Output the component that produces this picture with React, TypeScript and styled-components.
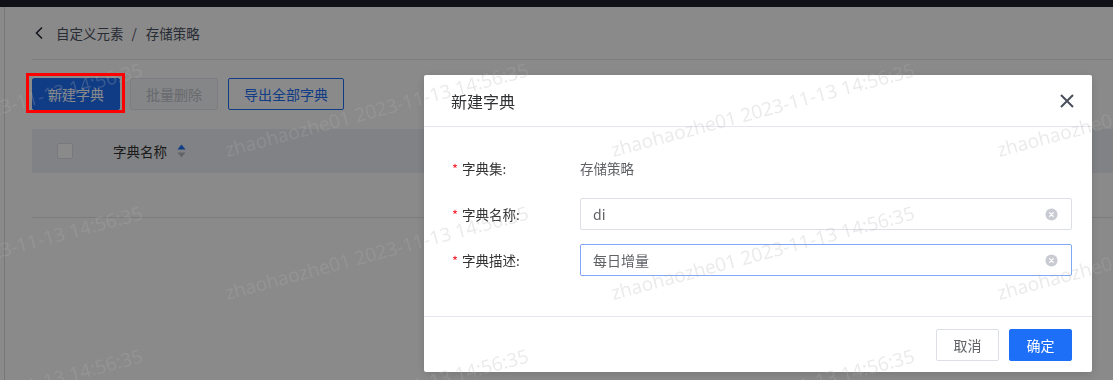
import React from 'react';
import styled, { createGlobalStyle } from 'styled-components';

const GlobalStyle = createGlobalStyle`
  html, body {
    margin: 0;
    padding: 0;
    width: 1113px;
    height: 380px;
    overflow: hidden;
    background: #ffffff;
    font-family: "Noto Sans CJK SC", "Noto Sans", sans-serif;
    font-size: 14px;
    color: #333333;
  }
  * { box-sizing: border-box; }
`;

const BLUE = '#1e6ff7';

// Page (under the mask)
const Page = styled.div`
  display: flex;
  flex-direction: column;
  width: 1113px;
  height: 380px;
`;

const TopBar = styled.div`
  height: 7px;
  background: #1f2129;
  flex-shrink: 0;
`;

const Main = styled.div`
  flex: 1;
  display: flex;
`;

const SideEdge = styled.div`
  width: 5px;
  border-right: 1px solid #dcdcdc;
  flex-shrink: 0;
`;

const Content = styled.div`
  flex: 1;
  padding: 0 0 0 27px;
  display: flex;
  flex-direction: column;
`;

const Breadcrumb = styled.div`
  height: 53px;
  display: flex;
  align-items: center;
  gap: 8px;
  border-bottom: 1px solid #ebebeb;
  color: #4b5263;
  font-size: 13.5px;
  padding-left: 2px;
`;

const BackIcon = styled.svg`
  width: 11px;
  height: 14px;
  margin-right: 3px;
`;

const Sep = styled.span`
  margin-right: 1px;
`;

const Toolbar = styled.div`
  display: flex;
  gap: 10px;
  margin-top: 18px;
`;

const Button = styled.button<{ $variant: 'primary' | 'disabled' | 'outline' }>`
  height: 32px;
  padding: 0 15px;
  border-radius: 2px;
  font-family: inherit;
  font-size: 14px;
  cursor: pointer;
  border: 1px solid
    ${({ $variant }) => ($variant === 'primary' ? BLUE : $variant === 'outline' ? BLUE : '#e4e7ed')};
  background: ${({ $variant }) => ($variant === 'primary' ? BLUE : $variant === 'outline' ? '#ffffff' : '#f5f7fa')};
  color: ${({ $variant }) => ($variant === 'primary' ? '#ffffff' : $variant === 'outline' ? BLUE : '#c0c4cc')};
`;

const Table = styled.div`
  margin-top: 19px;
  border-bottom: 1px solid #e6e6e6;
`;

const TableHead = styled.div`
  height: 44px;
  background: #eef0f5;
  display: flex;
  align-items: center;
  padding-left: 25px;
`;

const CheckBox = styled.span`
  width: 16px;
  height: 16px;
  border: 1px solid #dcdfe6;
  border-radius: 2px;
  background: #ffffff;
  margin-right: 40px;
`;

const HeadCell = styled.span`
  display: flex;
  align-items: center;
  gap: 10px;
  color: #333333;
  font-size: 13.5px;
`;

const SortIcon = styled.svg`
  width: 9px;
  height: 14px;
`;

const EmptyRow = styled.div`
  height: 44px;
`;

// Overlay layers
const Mask = styled.div`
  position: fixed;
  inset: 0;
  background: rgba(0, 0, 0, 0.46);
`;

const DialogLayer = styled.div`
  position: fixed;
  inset: 0;
  padding: 75px 0 0 424px;
`;

const Dialog = styled.div`
  width: 668px;
  background: #ffffff;
  border-radius: 2px;
  box-shadow: 0 2px 10px rgba(0, 0, 0, 0.15);
`;

const DialogHeader = styled.div`
  height: 52px;
  display: flex;
  align-items: center;
  justify-content: space-between;
  padding: 0 18px 0 27px;
  border-bottom: 1px solid #e4e7ed;
`;

const DialogTitle = styled.span`
  font-size: 16px;
  color: #303133;
`;

const CloseIcon = styled.svg`
  width: 14px;
  height: 14px;
`;

const DialogBody = styled.div`
  padding: 25px 20px 40px 28px;
  display: flex;
  flex-direction: column;
  gap: 14px;
`;

const FormItem = styled.div`
  display: flex;
  align-items: center;
  height: 32px;
`;

const Label = styled.label`
  width: 128px;
  flex-shrink: 0;
  color: #333333;
  font-size: 13.5px;
  display: flex;
  align-items: center;
`;

const Star = styled.span`
  color: #f5222d;
  margin-right: 4px;
  font-size: 13px;
`;

const StaticValue = styled.span`
  color: #606266;
  font-size: 13.5px;
`;

const InputBox = styled.div<{ $focused?: boolean }>`
  flex: 1;
  height: 32px;
  border: 1px solid ${({ $focused }) => ($focused ? '#7ea8f5' : '#dcdfe6')};
  border-radius: 2px;
  display: flex;
  align-items: center;
  padding: 0 13px 0 12px;
`;

const InputText = styled.span`
  flex: 1;
  color: #606266;
  font-size: 14px;
`;

const ClearIcon = styled.svg`
  width: 13px;
  height: 13px;
`;

const DialogFooter = styled.div`
  border-top: 1px solid #e4e7ed;
  padding: 12px 20px 11px 0;
  display: flex;
  justify-content: flex-end;
  gap: 10px;
`;

const FooterButton = styled.button<{ $primary?: boolean }>`
  height: 32px;
  width: 63px;
  border-radius: 2px;
  font-family: inherit;
  font-size: 14px;
  cursor: pointer;
  border: 1px solid ${({ $primary }) => ($primary ? BLUE : '#dcdfe6')};
  background: ${({ $primary }) => ($primary ? BLUE : '#ffffff')};
  color: ${({ $primary }) => ($primary ? '#ffffff' : '#606266')};
`;

const WatermarkLayer = styled.div`
  position: fixed;
  inset: 0;
  pointer-events: none;
  overflow: hidden;
`;

const Mark = styled.span`
  position: absolute;
  font-family: "Open Sans", sans-serif;
  font-size: 19px;
  line-height: 19px;
  white-space: nowrap;
  color: rgba(175, 175, 175, 0.26);
  transform-origin: 0 100%;
  transform: rotate(-15deg);
`;

const Annotation = styled.div`
  position: fixed;
  left: 26px;
  top: 73px;
  width: 99px;
  height: 40px;
  border: 3px solid #ff0000;
  pointer-events: none;
`;

const MARK_TEXT = 'zhaohaozhe01 2023-11-13 14:56:35';
const markCols = [-158, 228, 614, 1000];
const markRows = [160, 303, 446];

function Clear() {
  return (
    <ClearIcon viewBox="0 0 14 14">
      <circle cx="7" cy="7" r="6.5" fill="#c8cbd2" />
      <path d="M5 5 L9 9 M9 5 L5 9" stroke="#ffffff" strokeWidth="1.3" strokeLinecap="round" />
    </ClearIcon>
  );
}

export default function App() {
  return (
    <>
      <GlobalStyle />
      <Page>
        <TopBar />
        <Main>
          <SideEdge />
          <Content>
            <Breadcrumb>
              <BackIcon viewBox="0 0 11 14">
                <path d="M8 1.5 L2.5 7 L8 12.5" fill="none" stroke="#1c2130" strokeWidth="1.5" />
              </BackIcon>
              <span>自定义元素</span>
              <Sep>/</Sep>
              <span>存储策略</span>
            </Breadcrumb>
            <Toolbar>
              <Button $variant="primary">新建字典</Button>
              <Button $variant="disabled">批量删除</Button>
              <Button $variant="outline">导出全部字典</Button>
            </Toolbar>
            <Table>
              <TableHead>
                <CheckBox />
                <HeadCell>
                  字典名称
                  <SortIcon viewBox="0 0 9 14">
                    <path d="M4.5 0.5 L8.5 5.5 L0.5 5.5 Z" fill={BLUE} />
                    <path d="M0.5 8.5 L8.5 8.5 L4.5 13.5 Z" fill="#b4b8c0" />
                  </SortIcon>
                </HeadCell>
              </TableHead>
              <EmptyRow />
            </Table>
          </Content>
        </Main>
      </Page>

      <Mask />

      <DialogLayer>
        <Dialog>
          <DialogHeader>
            <DialogTitle>新建字典</DialogTitle>
            <CloseIcon viewBox="0 0 14 14">
              <path d="M1 1 L13 13 M13 1 L1 13" stroke="#4a4f5c" strokeWidth="2" />
            </CloseIcon>
          </DialogHeader>
          <DialogBody>
            <FormItem>
              <Label><Star>*</Star>字典集:</Label>
              <StaticValue>存储策略</StaticValue>
            </FormItem>
            <FormItem>
              <Label><Star>*</Star>字典名称:</Label>
              <InputBox>
                <InputText>di</InputText>
                <Clear />
              </InputBox>
            </FormItem>
            <FormItem>
              <Label><Star>*</Star>字典描述:</Label>
              <InputBox $focused>
                <InputText>每日增量</InputText>
                <Clear />
              </InputBox>
            </FormItem>
          </DialogBody>
          <DialogFooter>
            <FooterButton>取消</FooterButton>
            <FooterButton $primary>确定</FooterButton>
          </DialogFooter>
        </Dialog>
      </DialogLayer>

      <WatermarkLayer>
        {markRows.map((y) =>
          markCols.map((x) => (
            <Mark key={`${x}-${y}`} style={{ left: x, top: y - 19 }}>
              {MARK_TEXT}
            </Mark>
          ))
        )}
      </WatermarkLayer>

      <Annotation />
    </>
  );
}
